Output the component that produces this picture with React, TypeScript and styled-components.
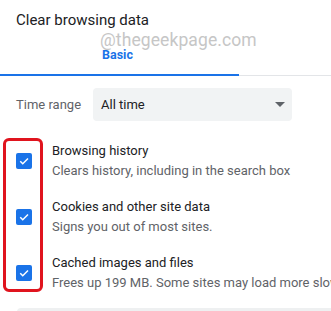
import styled, { createGlobalStyle } from "styled-components";

const GlobalStyle = createGlobalStyle`
  html, body {
    margin: 0;
    padding: 0;
    background: #ffffff;
    overflow: hidden;
  }
  body {
    font-family: Roboto, "Liberation Sans", Arial, sans-serif;
    color: #202124;
  }
`;

const Dialog = styled.div`
  position: relative;
  width: 331px;
  height: 311px;
  overflow: hidden;
  background: #fff;
`;

const Title = styled.div`
  padding: 10px 16px 0;
  font-size: 15px;
  line-height: 20px;
  color: #202124;
`;

const Tabs = styled.div`
  display: flex;
  border-bottom: 1px solid #e3e5e8;
`;

const Tab = styled.div<{ $active?: boolean }>`
  width: 239px;
  height: 44px;
  box-sizing: content-box;
  padding-top: 0;
  display: flex;
  justify-content: center;
  align-items: flex-start;
  border-bottom: 2px solid ${(p) => (p.$active ? "#1a73e8" : "transparent")};
  margin-bottom: -1px;
`;

const TabLabel = styled.span`
  margin-top: 17px;
  font-size: 12.5px;
  line-height: 16px;
  font-weight: 700;
  color: #1a73e8;
  margin-left: -4px;
`;

const Watermark = styled.div`
  position: absolute;
  left: 100px;
  top: 30px;
  font-size: 17.5px;
  line-height: 20px;
  color: #c6c6c6;
  letter-spacing: 0.1px;
`;

const RangeRow = styled.div`
  display: flex;
  align-items: center;
  margin-top: 12px;
  padding-left: 16px;
  gap: 13px;
`;

const RangeLabel = styled.span`
  font-size: 13px;
  color: #5f6368;
  width: 64px;
  white-space: nowrap;
`;

const Select = styled.div`
  width: 199px;
  height: 33px;
  box-sizing: border-box;
  padding: 0 7px 0 8px;
  background: #f1f3f4;
  border-radius: 4px;
  display: flex;
  align-items: center;
  justify-content: space-between;
  font-size: 13px;
  color: #202124;
`;

const Caret = styled.span`
  width: 0;
  height: 0;
  border-left: 5px solid transparent;
  border-right: 5px solid transparent;
  border-top: 5px solid #5f6368;
`;

const List = styled.div`
  display: flex;
  flex-direction: column;
  gap: 16px;
  margin-top: 20px;
`;

const Item = styled.div`
  display: flex;
  align-items: center;
  padding-left: 16px;
  gap: 20px;
`;

const Box = styled.span`
  flex: none;
  width: 16px;
  height: 16px;
  border-radius: 2px;
  background: #1a73e8;
  display: flex;
  align-items: center;
  justify-content: center;
`;

const Texts = styled.div`
  display: flex;
  flex-direction: column;
  white-space: nowrap;
`;

const Primary = styled.span`
  font-size: 13px;
  line-height: 20px;
  color: #202124;
`;

const Secondary = styled.span`
  font-size: 13px;
  line-height: 20px;
  color: #5f6368;
`;

const Highlight = styled.div`
  position: absolute;
  left: 3px;
  top: 138px;
  width: 40px;
  height: 154px;
  box-sizing: border-box;
  border: 3px solid #e0141e;
  border-radius: 6px;
  pointer-events: none;
`;

const NextField = styled.div`
  margin: 15px 0 0 17px;
  height: 20px;
  background: #eef0f1;
  border-radius: 4px 0 0 0;
`;

const items = [
  { title: "Browsing history", desc: "Clears history, including in the search box" },
  { title: "Cookies and other site data", desc: "Signs you out of most sites." },
  { title: "Cached images and files", desc: "Frees up 199 MB. Some sites may load more slowly on your next visit." },
];

function Check() {
  return (
    <svg width="12" height="12" viewBox="0 0 24 24">
      <path d="M4.5 12.5l5 5L20 7" fill="none" stroke="#fff" strokeWidth="3" />
    </svg>
  );
}

export default function App() {
  return (
    <>
      <GlobalStyle />
      <Dialog>
        <Title>Clear browsing data</Title>
        <Tabs>
          <Tab $active>
            <TabLabel>Basic</TabLabel>
          </Tab>
        </Tabs>
        <Watermark>@thegeekpage.com</Watermark>
        <RangeRow>
          <RangeLabel>Time range</RangeLabel>
          <Select>
            <span>All time</span>
            <Caret />
          </Select>
        </RangeRow>
        <List>
          {items.map((it) => (
            <Item key={it.title}>
              <Box>
                <Check />
              </Box>
              <Texts>
                <Primary>{it.title}</Primary>
                <Secondary>{it.desc}</Secondary>
              </Texts>
            </Item>
          ))}
        </List>
        <NextField />
        <Highlight />
      </Dialog>
    </>
  );
}
